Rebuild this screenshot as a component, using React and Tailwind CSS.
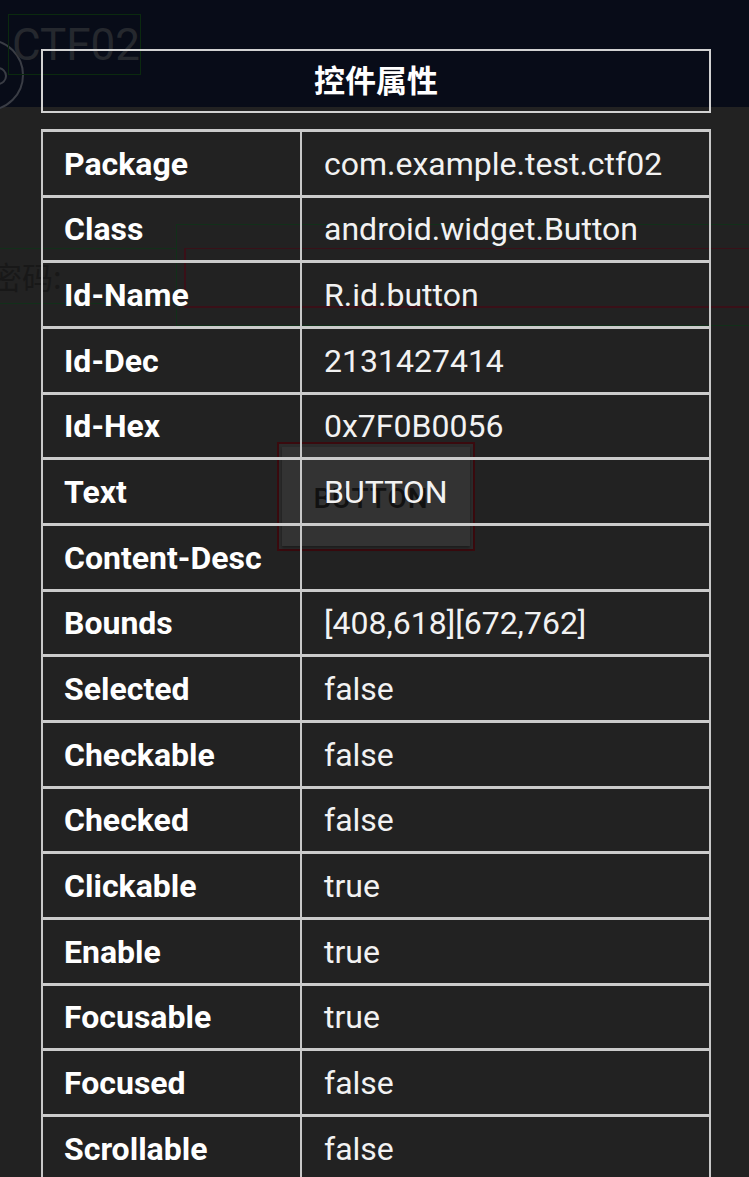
const rows = [
  ["Package", "com.example.test.ctf02"],
  ["Class", "android.widget.Button"],
  ["Id-Name", "R.id.button"],
  ["Id-Dec", "2131427414"],
  ["Id-Hex", "0x7F0B0056"],
  ["Text", "BUTTON"],
  ["Content-Desc", ""],
  ["Bounds", "[408,618][672,762]"],
  ["Selected", "false"],
  ["Checkable", "false"],
  ["Checked", "false"],
  ["Clickable", "true"],
  ["Enable", "true"],
  ["Focusable", "true"],
  ["Focused", "false"],
  ["Scrollable", "false"],
];

function BackApp() {
  // the app underneath, seen through the dim layer
  return (
    <>
      <div className="h-[107px] bg-[#080c18]" />
      <svg className="absolute left-0 top-0" width="60" height="130">
        <circle cx="-12" cy="75" r="35" fill="none" stroke="#3a3d45" strokeWidth="2" />
        <path d="M-2 68 A8 8 0 0 1 -2 84" fill="none" stroke="#3a3d45" strokeWidth="2" />
      </svg>
      <div className="absolute left-[8px] top-[14px] w-[133px] h-[61px] border border-[#0b2a0f] flex items-center pl-[3px] text-[44px] leading-none text-[#25282e] [font-family:Roboto,sans-serif]">
        CTF02
      </div>
      <div className="absolute left-[-10px] top-[248px] w-[187px] h-[56px] border border-[#12301a] flex items-center text-[31px] text-[#181818] [font-family:'Noto_Sans_CJK_SC',sans-serif]">
        密码:
      </div>
      <div className="absolute left-[176px] top-[224px] w-[600px] h-[102px] border border-[#12301a]" />
      <div className="absolute left-[184px] top-[248px] w-[600px] h-[60px] border-l-2 border-b-2 border-t border-[#3a1018]" />
      <div className="absolute left-[277px] top-[442px] w-[198px] h-[109px] border-2 border-[#3a0a0e] bg-[#2c2c2c] p-[3px]">
        <div className="h-full w-full bg-[#333333] shadow-[0_2px_3px_rgba(0,0,0,0.4)] flex items-center justify-center pr-[10px] pt-[4px] text-[28px] font-medium text-[#111111] [font-family:Roboto,sans-serif] tracking-[1px]">
          BUTTON
        </div>
      </div>
    </>
  );
}

export default function App() {
  return (
    <div className="relative w-[749px] h-[1177px] overflow-hidden bg-[#222222] [font-family:Roboto,'Noto_Sans_CJK_SC',sans-serif]">
      <BackApp />

      <div className="absolute left-[41px] top-[49px] w-[670px]">
        <div className="h-[64px] border-2 border-[#d2d2d2] flex items-center justify-center pb-[3px] text-[31px] font-bold text-white [font-family:'Noto_Sans_CJK_SC',sans-serif]">
          控件属性
        </div>

        <div className="mt-[16px] border-l-2 border-r-2 border-[#c8c8c8]">
          {rows.map(([k, v]) => (
            <div
              key={k}
              className="grid grid-cols-[259px_1fr] h-[65.67px] border-t-[3px] border-[#cbcbcb]"
            >
              <div className="border-r-2 border-[#c8c8c8] pl-[21px] pt-[1px] flex items-center text-[32px] font-bold text-white">
                {k}
              </div>
              <div className="pl-[22px] pt-[1px] flex items-center text-[32px] text-[#f2f2f2]">
                {v}
              </div>
            </div>
          ))}
        </div>
      </div>
    </div>
  );
}
